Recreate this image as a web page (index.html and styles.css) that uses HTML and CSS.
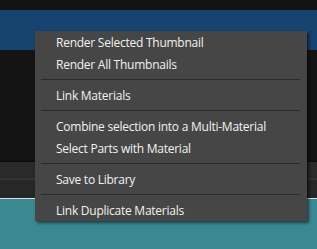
FILE: index.html
```html
<!DOCTYPE html>
<html>
<head>
<meta charset="utf-8">
<link rel="stylesheet" href="styles.css">
</head>
<body>
<div class="app">
  <div class="topstrip"></div>
  <div class="bluebar"></div>
  <div class="panel"></div>
  <div class="toolbar"><div class="tb-main"></div><div class="tb-side"></div></div>
  <div class="toolbar2"><div class="tb-main"></div><div class="tb-side"></div></div>
  <div class="viewport"></div>
</div>
<div class="menu">
  <div class="item">Render Selected Thumbnail</div>
  <div class="item">Render All Thumbnails</div>
  <div class="sep"></div>
  <div class="item">Link Materials</div>
  <div class="sep"></div>
  <div class="item">Combine selection into a Multi-Material</div>
  <div class="item">Select Parts with Material</div>
  <div class="sep"></div>
  <div class="item">Save to Library</div>
  <div class="sep"></div>
  <div class="item">Link Duplicate Materials</div>
</div>
</body>
</html>
```
FILE: styles.css
```css
html, body {
  margin: 0;
  padding: 0;
  width: 317px;
  height: 249px;
  overflow: hidden;
  background: #141414;
}
.app {
  display: flex;
  flex-direction: column;
  height: 249px;
}
.topstrip {
  height: 10px;
  background: #131313;
}
.bluebar {
  height: 40px;
  background: #164370;
}
.panel {
  height: 111px;
  background: #141414;
  border-bottom: 1px solid #0a0a0a;
}
.toolbar {
  height: 16px;
  display: flex;
  border-bottom: 2px solid #333333;
}
.toolbar2 {
  height: 18px;
  display: flex;
  border-bottom: 1px solid #dcdcdc;
}
.tb-main {
  flex: 1;
  background: #2a2a2a;
}
.tb-side {
  width: 9px;
  background: #2a2a2a;
  border-left: 1px solid #1c1c1c;
}
.toolbar2 .tb-main, .toolbar2 .tb-side {
  background: #272727;
}
.viewport {
  flex: 1;
  background: #3c8892;
}
.menu {
  position: absolute;
  left: 35px;
  top: 31px;
  width: 272px;
  background: #464646;
  box-shadow: 2px 2px 3px rgba(0, 0, 0, 0.55);
  font-family: "Open Sans", "Noto Sans", sans-serif;
  font-size: 12px;
  letter-spacing: -0.25px;
  color: #f2f2f2;
}
.item {
  height: 22px;
  line-height: 23px;
  padding-left: 21px;
  white-space: nowrap;
}
.sep {
  height: 1px;
  margin: 4px 7px 4px 6px;
  background: #2c2c2c;
}
```
